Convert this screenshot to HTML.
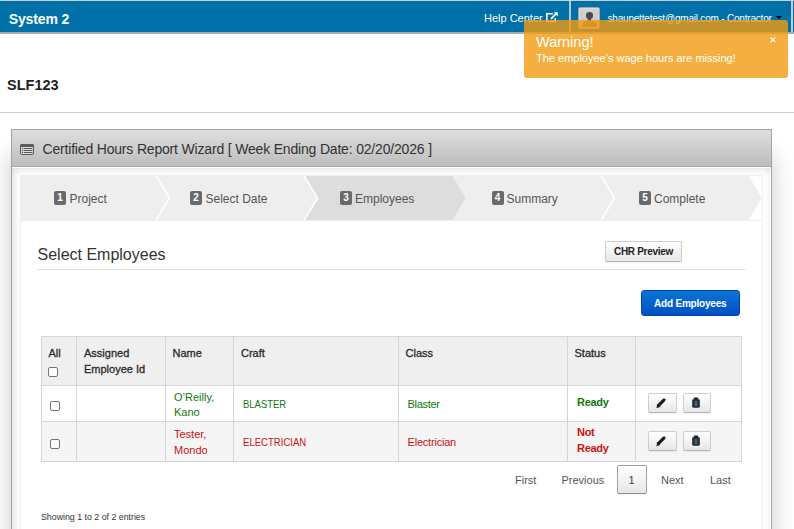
<!DOCTYPE html>
<html><head><meta charset="utf-8">
<style>
*{box-sizing:border-box;margin:0;padding:0}
html,body{width:794px;height:529px;overflow:hidden;background:#fff;font-family:"Liberation Sans",sans-serif;color:#333}
.abs{position:absolute}
.t{position:absolute;white-space:nowrap;line-height:1}
#hdr{left:0;top:0;width:794px;height:34px;background:#0070a8;border-top:1px solid #c8d0d8;border-bottom:2px solid #a2abb2}
#toast{left:524px;top:20px;width:264px;height:58px;border-radius:3px;background:rgba(242,155,16,.8)}
#panel{left:11px;top:129px;width:761px;height:420px;border:1px solid #a3a3a3;box-shadow:0 26px 22px rgba(0,0,0,.22);background:#fff}
#phead{left:0;top:0;width:759px;height:37px;background:linear-gradient(#dedede,#bdbdbd);border-bottom:1px solid #a8a8a8}
.btn{position:absolute;border:1px solid #cdcdcd;border-bottom-color:#b4b4b4;border-radius:2px;background:linear-gradient(#ffffff,#e6e6e6);box-shadow:0 1px 1px rgba(0,0,0,.06)}
.cb{position:absolute;width:10px;height:10px;border:1px solid #767676;border-radius:2px;background:#fff}
.vl{position:absolute;width:1px;background:#d6d6d6}
.hl{position:absolute;height:1px;background:#d6d6d6}
.badge{position:absolute;top:191px;width:12px;height:14px;border-radius:2px;background:#6a6a6a;color:#fff;font-size:10px;font-weight:bold;line-height:13px;text-align:center}
.step{position:absolute;top:193px;font-size:12px;line-height:1;color:#555;white-space:nowrap}
.th{font-size:11px;color:#2a2a2a;-webkit-text-stroke:0.3px #2a2a2a}
.g{color:#0f780f}
.r{color:#cc1111}
.pg{font-size:11px;color:#555}
</style></head><body>
<div id="hdr" class="abs"></div>
<div class="t" style="left:8.8px;top:12px;font-size:14px;font-weight:bold;color:#fff;letter-spacing:-0.15px">System 2</div>
<div class="t" style="left:484px;top:13px;font-size:11px;color:#fff">Help Center</div>
<svg class="abs" style="left:545px;top:10px" width="15" height="13" viewBox="0 0 15 13">
 <path d="M7.8 3.8H1.8V11.4H10.2V8.2" fill="none" stroke="#fff" stroke-width="1.6"/>
 <path d="M6 8.8L11.2 3.6" stroke="#fff" stroke-width="1.8"/>
 <path d="M8.6 2.2H12.8V6.4Z" fill="#fff"/>
</svg>
<div class="abs" style="left:569px;top:1px;width:2px;height:31px;background:#b9c4cc"></div>
<div class="abs" style="left:791px;top:1px;width:2px;height:31px;background:#c6ccd0"></div>
<div class="abs" style="left:578px;top:7px;width:22px;height:22px;border-radius:2px;border:1px solid #a9a49e;background:linear-gradient(#d4d4d4,#c4c4c4);overflow:hidden">
 <div class="abs" style="left:0;top:0;width:20px;height:20px;border:1px solid #dcdcdc;border-radius:1px"></div>
 <div class="abs" style="left:7px;top:4px;width:6.5px;height:7px;border-radius:3.3px;background:#4a4a4a"></div><div class="abs" style="left:8.5px;top:10px;width:3.5px;height:3px;background:#4a4a4a"></div>
 <div class="abs" style="left:3px;top:12.5px;width:15px;height:6px;border-radius:7px 7px 1px 1px;background:#7a7a7a"></div>
</div>
<div class="t" style="left:607.5px;top:14px;font-size:10px;color:#fff;letter-spacing:-0.2px">shaunettetest@gmail.com - Contractor</div>
<svg class="abs" style="left:776px;top:16px" width="6" height="3"><path d="M0 0h6L3 3z" fill="#000"/></svg>

<div id="toast" class="abs"></div>
<div class="t" style="left:536px;top:35px;font-size:14.5px;color:#fff">Warning!</div>
<div class="t" style="left:536px;top:53px;font-size:11px;color:#fff">The employee’s wage hours are missing!</div>
<svg class="abs" style="left:769px;top:36px" width="8" height="8" viewBox="0 0 8 8"><path d="M1.5 1.5L6.2 6.2M6.2 1.5L1.5 6.2" stroke="#fff" stroke-width="1.2"/></svg>

<div class="t" style="left:7px;top:78px;font-size:14.5px;font-weight:bold;color:#222">SLF123</div>
<div class="abs" style="left:0;top:112px;width:794px;height:1px;background:#cfcfcf"></div>

<div id="panel" class="abs">
 <div id="phead" class="abs"></div>
 <div class="abs" style="left:0;top:37px;width:759px;height:400px;box-shadow:inset -1px 1px 0 #fff,inset 1px 1px 8px rgba(0,0,0,.17)"></div>
 <div class="abs" style="left:8px;top:45px;width:743px;height:400px;border:1px solid #f1f1f1;background:#fff"></div>
</div>
<svg class="abs" style="left:20px;top:144px" width="14" height="11" viewBox="0 0 14 11">
 <rect x="0.5" y="0.5" width="13" height="10" rx="1.5" fill="#dcdcdc" stroke="#575c60" stroke-width="1"/>
 <rect x="0" y="0" width="14" height="3" rx="1.5" fill="#575c60"/><rect x="0" y="1.5" width="14" height="1.5" fill="#575c60"/>
 <g fill="#575c60"><circle cx="2.5" cy="4.5" r=".65"/><circle cx="2.5" cy="6.5" r=".65"/><circle cx="2.5" cy="8.5" r=".65"/></g>
 <path d="M4.2 4.5h7.8M4.2 6.5h7.8M4.2 8.5h7.8" stroke="#575c60" stroke-width="1" stroke-linecap="round"/>
</svg>
<div class="t" style="left:42.5px;top:142px;font-size:14px;letter-spacing:-0.18px;color:#333">Certified Hours Report Wizard [ Week Ending Date: 02/20/2026 ]</div>

<!-- steps -->
<svg class="abs" style="left:20px;top:175px" width="742" height="46" viewBox="0 0 742 46">
 <rect x="0" y="0" width="742" height="46" fill="#eeeeee"/>
 <path d="M284 1L297.7 23L284 45H432.6L445.4 23L432.6 1Z" fill="#dddddd"/>
 <path d="M728.8 1L741.7 23L728.8 45H742V1Z" fill="#ffffff"/>
 <g fill="none" stroke="#fff" stroke-width="1.5">
  <path d="M136.1 1L149.6 23L136.1 45"/>
  <path d="M284.1 1L297.7 23L284.1 45"/>
  <path d="M581.2 1L594.6 23L581.2 45"/>
 </g>
</svg>
<div class="badge" style="left:54px">1</div><div class="step" style="left:69.5px">Project</div>
<div class="badge" style="left:190px">2</div><div class="step" style="left:205.5px">Select Date</div>
<div class="badge" style="left:340px">3</div><div class="step" style="left:355px">Employees</div>
<div class="badge" style="left:491.5px">4</div><div class="step" style="left:506.5px">Summary</div>
<div class="badge" style="left:639px">5</div><div class="step" style="left:654px">Complete</div>

<div class="t" style="left:37.5px;top:247px;font-size:16px;color:#333">Select Employees</div>
<div class="hl" style="left:37px;top:269px;width:709px;background:#e2e2e2"></div>

<div class="btn" style="left:605px;top:241px;width:77px;height:21px"></div>
<div class="t" style="left:614px;top:247px;font-size:10px;font-weight:bold;color:#222;letter-spacing:-0.3px">CHR Preview</div>

<div class="abs" style="left:641px;top:290px;width:99px;height:26px;border-radius:3px;border:1px solid #0048a8;background:linear-gradient(#0b74d4,#0050c4)"></div>
<div class="t" style="left:654px;top:299px;font-size:10px;font-weight:bold;color:#fff;letter-spacing:-0.2px">Add Employees</div>

<!-- table -->
<div class="abs" style="left:41px;top:336px;width:701px;height:49px;background:#efefef"></div>
<div class="abs" style="left:41px;top:421px;width:701px;height:40px;background:#f5f5f5"></div>
<div class="hl" style="left:41px;top:336px;width:701px"></div>
<div class="hl" style="left:41px;top:385px;width:701px"></div>
<div class="hl" style="left:41px;top:421px;width:701px"></div>
<div class="hl" style="left:41px;top:461px;width:701px"></div>
<div class="vl" style="left:41px;top:336px;height:126px"></div>
<div class="vl" style="left:76px;top:336px;height:126px"></div>
<div class="vl" style="left:165px;top:336px;height:126px"></div>
<div class="vl" style="left:233px;top:336px;height:126px"></div>
<div class="vl" style="left:398px;top:336px;height:126px"></div>
<div class="vl" style="left:567px;top:336px;height:126px"></div>
<div class="vl" style="left:635px;top:336px;height:126px"></div>
<div class="vl" style="left:741px;top:336px;height:126px"></div>

<div class="t th" style="left:48.5px;top:348px">All</div>
<div class="cb" style="left:48px;top:367px"></div>
<div class="t th" style="left:84px;top:348px">Assigned</div>
<div class="t th" style="left:84px;top:364px">Employee Id</div>
<div class="t th" style="left:172.5px;top:348px">Name</div>
<div class="t th" style="left:241px;top:348px">Craft</div>
<div class="t th" style="left:405.5px;top:348px">Class</div>
<div class="t th" style="left:574.5px;top:348px">Status</div>

<div class="cb" style="left:50px;top:401px"></div>
<div class="t g" style="left:174px;top:392px;font-size:11px">O’Reilly,</div>
<div class="t g" style="left:174px;top:407px;font-size:11px">Kano</div>
<div class="t g" style="left:243px;top:399px;font-size:11px;transform:scaleX(0.86);transform-origin:0 0">BLASTER</div>
<div class="t g" style="left:407.5px;top:399px;font-size:11px;letter-spacing:-0.3px">Blaster</div>
<div class="t g" style="left:577px;top:397px;font-size:11px;font-weight:bold;letter-spacing:-0.3px">Ready</div>

<div class="cb" style="left:50px;top:439px"></div>
<div class="t r" style="left:174px;top:429px;font-size:11px">Tester,</div>
<div class="t r" style="left:174px;top:445px;font-size:11px">Mondo</div>
<div class="t r" style="left:243px;top:437px;font-size:11px;transform:scaleX(0.87);transform-origin:0 0">ELECTRICIAN</div>
<div class="t r" style="left:407.5px;top:437px;font-size:11px;letter-spacing:-0.2px">Electrician</div>
<div class="t r" style="left:577px;top:427px;font-size:11px;font-weight:bold;letter-spacing:-0.3px">Not</div>
<div class="t r" style="left:577px;top:443px;font-size:11px;font-weight:bold;letter-spacing:-0.3px">Ready</div>

<div class="btn" style="left:648px;top:393px;width:29px;height:20px"></div>
<div class="btn" style="left:683px;top:393px;width:28px;height:20px"></div>
<div class="btn" style="left:648px;top:431px;width:29px;height:20px"></div>
<div class="btn" style="left:683px;top:431px;width:28px;height:20px"></div>


<svg class="abs" style="left:648px;top:393px" width="70" height="60" viewBox="0 0 70 60">
 <g><path d="M9.6 13.4L16.3 6.7" stroke="#1a1a1a" stroke-width="3.1"/><path d="M8.3 15.1L9.5 11.5L12.2 14Z" fill="#1a1a1a"/><path d="M15.5 5.9L17.1 7.5" stroke="#1a1a1a" stroke-width="2"/><rect x="45.6" y="4.6" width="4.8" height="2.6" rx="1.2" fill="#1b2530"/><path d="M44.2 6.4H51.8V13.3Q51.8 14.7 50.4 14.7H45.6Q44.2 14.7 44.2 13.3Z" fill="#1b2530"/><path d="M48 7.6V13.4" stroke="#9aa0a6" stroke-width=".9"/><path d="M46.2 8.2V13.2M49.8 8.2V13.2" stroke="#5a6068" stroke-width=".6"/></g>
 <g transform="translate(0,38)"><path d="M9.6 13.4L16.3 6.7" stroke="#1a1a1a" stroke-width="3.1"/><path d="M8.3 15.1L9.5 11.5L12.2 14Z" fill="#1a1a1a"/><path d="M15.5 5.9L17.1 7.5" stroke="#1a1a1a" stroke-width="2"/><rect x="45.6" y="4.6" width="4.8" height="2.6" rx="1.2" fill="#1b2530"/><path d="M44.2 6.4H51.8V13.3Q51.8 14.7 50.4 14.7H45.6Q44.2 14.7 44.2 13.3Z" fill="#1b2530"/><path d="M48 7.6V13.4" stroke="#9aa0a6" stroke-width=".9"/><path d="M46.2 8.2V13.2M49.8 8.2V13.2" stroke="#5a6068" stroke-width=".6"/></g>
</svg>
<!-- pagination -->
<div class="t pg" style="left:515px;top:475px">First</div>
<div class="t pg" style="left:561.5px;top:475px">Previous</div>
<div class="btn" style="left:617px;top:465px;width:30px;height:29px;border-color:#a0a0a0;border-bottom-color:#8e8e8e"></div>
<div class="t pg" style="left:628.5px;top:475px;color:#444">1</div>
<div class="t pg" style="left:661px;top:475px">Next</div>
<div class="t pg" style="left:710px;top:475px">Last</div>

<div class="t" style="left:41px;top:513px;font-size:8.8px;color:#333">Showing 1 to 2 of 2 entries</div>
</body></html>
